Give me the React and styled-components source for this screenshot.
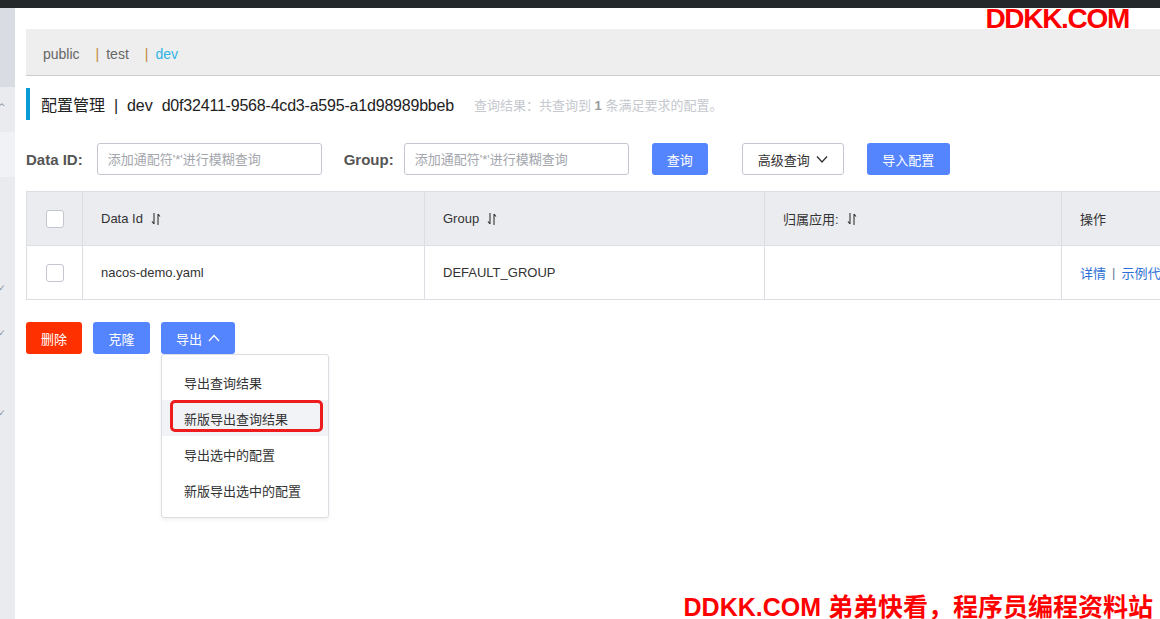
import React from "react";
import styled, { createGlobalStyle } from "styled-components";

const GlobalStyle = createGlobalStyle`
  html, body {
    margin: 0;
    padding: 0;
    background: #ffffff;
    overflow: hidden;
  }
  body {
    font-family: "Liberation Sans", "Noto Sans CJK SC", sans-serif;
    color: #333;
  }
  * { box-sizing: border-box; }
`;

const Page = styled.div`
  position: relative;
  width: 1160px;
  height: 619px;
  overflow: hidden;
  display: flex;
  flex-direction: column;
`;

const TopBar = styled.div`
  height: 8px;
  flex: none;
  background: #25282b;
`;

const Body = styled.div`
  flex: 1;
  display: flex;
  min-height: 0;
`;

const Sidebar = styled.div`
  width: 15px;
  flex: none;
  display: flex;
  flex-direction: column;
  background: #e9ebef;
`;

const SideBlock = styled.div`
  height: ${(p) => p.h}px;
  flex: none;
  background: ${(p) => p.bg || "transparent"};
  position: relative;
`;

const SideMark = styled.span`
  position: absolute;
  left: -2px;
  top: ${(p) => p.top}px;
  font-size: 9px;
  line-height: 9px;
  color: #8a8f99;
  font-family: "DejaVu Sans", sans-serif;
`;

const Main = styled.div`
  flex: 1;
  min-width: 0;
  padding: 21px 0 0 11px;
  display: flex;
  flex-direction: column;
`;

const NamespaceBar = styled.div`
  height: 47px;
  background: #eeeeee;
  border-bottom: 1px solid #cccccc;
  display: flex;
  align-items: center;
  padding: 3px 0 0 17px;
  font-size: 14px;
`;

const NsItem = styled.span`
  color: ${(p) => (p.active ? "#2fb4e5" : "#666")};
  margin-right: 16px;
`;

const NsSep = styled.span`
  color: #c1883a;
  margin-right: 7px;
`;

const TitleRow = styled.div`
  margin-top: 12px;
  height: 32px;
  border-left: 4px solid #0a9bd4;
  padding-left: 11px;
  display: flex;
  align-items: center;
  gap: 20px;
`;

const TitleText = styled.span`
  font-size: 16px;
  color: #222;
  white-space: pre;
`;

const Hash = styled.span`
  letter-spacing: -0.2px;
`;

const ResultText = styled.span`
  font-size: 13px;
  color: #c5c8ce;
  b {
    color: #999;
    font-weight: bold;
  }
`;

const SearchRow = styled.div`
  margin-top: 23px;
  height: 32px;
  display: flex;
  align-items: center;
`;

const Label = styled.label`
  font-size: 15px;
  font-weight: bold;
  color: #555;
  margin-right: ${(p) => p.mr}px;
`;

const Input = styled.input`
  width: 225px;
  height: 32px;
  border: 1px solid #c4c6cf;
  border-radius: 3px;
  padding: 0 10px;
  font-size: 13px;
  font-family: "Liberation Sans", "Noto Sans CJK SC", sans-serif;
  margin-right: ${(p) => p.mr}px;
  &::placeholder {
    color: #a3a6ad;
  }
`;

const Button = styled.button`
  height: 32px;
  padding: 0;
  border-radius: 3px;
  border: 1px solid ${(p) => (p.kind === "normal" ? "#c4c6cf" : "transparent")};
  background: ${(p) =>
    p.kind === "danger" ? "#ff3000" : p.kind === "normal" ? "#fff" : "#5584ff"};
  color: ${(p) => (p.kind === "normal" ? "#333" : "#fff")};
  font-size: 13px;
  font-family: "Liberation Sans", "Noto Sans CJK SC", sans-serif;
  display: inline-flex;
  align-items: center;
  justify-content: center;
  gap: 6px;
  margin-right: ${(p) => p.mr || 0}px;
  width: ${(p) => p.w}px;
  flex: none;
  cursor: pointer;
`;

const Table = styled.div`
  margin-top: 16px;
  width: 1200px;
  border: 1px solid #dcdee3;
  border-right: none;
  display: grid;
  grid-template-columns: 55px 342px 340px 297px 1fr;
`;

const Cell = styled.div`
  height: ${(p) => (p.head ? 54 : 53)}px;
  background: ${(p) => (p.head ? "#ebecf0" : "#fff")};
  border-left: ${(p) => (p.first ? "none" : "1px solid #dcdee3")};
  border-bottom: ${(p) => (p.head ? "1px solid #dcdee3" : "none")};
  display: flex;
  align-items: center;
  justify-content: ${(p) => (p.center ? "center" : "flex-start")};
  padding-left: ${(p) => (p.center ? 0 : 18)}px;
  font-size: 13px;
  color: #333;
  gap: ${(p) => (p.links ? 0 : 8)}px;
`;

const Checkbox = styled.span`
  width: 18px;
  height: 18px;
  border: 1px solid #c4c6cf;
  border-radius: 3px;
  background: #fff;
  display: block;
`;

const LinkText = styled.span`
  color: #2c6fd6;
`;

const LinkSep = styled.span`
  color: #6b7a99;
  margin: 0 6px;
`;

const ActionRow = styled.div`
  margin-top: 22px;
  display: flex;
  align-items: flex-start;
`;

const ExportWrap = styled.div`
  position: relative;
`;

const Menu = styled.div`
  position: absolute;
  top: 32px;
  left: 0;
  width: 168px;
  padding: 9px 0 9px;
  background: #fff;
  border: 1px solid #dcdee3;
  border-radius: 3px;
  box-shadow: 0 2px 4px rgba(0, 0, 0, 0.06);
  z-index: 5;
`;

const MenuItem = styled.div`
  position: relative;
  height: 36px;
  display: flex;
  align-items: center;
  padding-left: 22px;
  font-size: 13px;
  color: #333;
  white-space: nowrap;
  background: ${(p) => (p.hover ? "#f2f3f7" : "transparent")};
`;

const Annotation = styled.span`
  position: absolute;
  left: 8px;
  top: 0;
  width: 153px;
  height: 32px;
  border: 3px solid #ee1c1c;
  border-radius: 5px;
`;

const WatermarkTop = styled.div`
  position: absolute;
  top: 3px;
  right: 31px;
  color: #ff0000;
  font-size: 28px;
  font-weight: bold;
  letter-spacing: -1.3px;
  font-family: "Liberation Sans", sans-serif;
`;

const WatermarkBottom = styled.div`
  position: absolute;
  bottom: -4px;
  right: 7px;
  color: #ff0000;
  font-size: 25px;
  font-weight: bold;
  white-space: pre;
  font-family: "Liberation Sans", "Noto Sans CJK SC", sans-serif;
`;

const SortIcon = () => (
  <svg width="10" height="14" viewBox="0 0 10 14" fill="none" stroke="#333" strokeWidth="1.1">
    <path d="M3 1v11M1 9.5l2 2.5" />
    <path d="M7 13V2M9 4.5L7 2" />
  </svg>
);

const Chevron = ({ up }) => (
  <svg width="12" height="8" viewBox="0 0 12 8" fill="none" stroke="currentColor" strokeWidth="1.3">
    {up ? <path d="M1 7l5-5.5 5 5.5" /> : <path d="M1 1.5l5 5.5 5-5.5" />}
  </svg>
);

export default function App() {
  return (
    <Page>
      <GlobalStyle />
      <TopBar />
      <Body>
        <Sidebar>
          <SideBlock h={79} bg="#d9dce3" />
          <SideBlock h={45} bg="#e9ebef">
            <SideMark top={16}>^</SideMark>
          </SideBlock>
          <SideBlock h={45} bg="#f1f2f5" />
          <SideBlock h={107} />
          <SideBlock h={45}>
            <SideMark top={0}>✓</SideMark>
          </SideBlock>
          <SideBlock h={80}>
            <SideMark top={0}>✓</SideMark>
          </SideBlock>
          <SideBlock h={20}>
            <SideMark top={0}>✓</SideMark>
          </SideBlock>
        </Sidebar>
        <Main>
          <NamespaceBar>
            <NsItem>public</NsItem>
            <NsSep>|</NsSep>
            <NsItem>test</NsItem>
            <NsSep>|</NsSep>
            <NsItem active>dev</NsItem>
          </NamespaceBar>

          <TitleRow>
            <TitleText>
              配置管理  |  dev  <Hash>d0f32411-9568-4cd3-a595-a1d98989bbeb</Hash>
            </TitleText>
            <ResultText>
              查询结果：共查询到 <b>1</b> 条满足要求的配置。
            </ResultText>
          </TitleRow>

          <SearchRow>
            <Label mr={14}>Data ID:</Label>
            <Input placeholder="添加通配符'*'进行模糊查询" mr={22} />
            <Label mr={10}>Group:</Label>
            <Input placeholder="添加通配符'*'进行模糊查询" mr={23} />
            <Button w={56} mr={34}>查询</Button>
            <Button kind="normal" w={102} mr={23}>
              高级查询 <Chevron />
            </Button>
            <Button w={83}>导入配置</Button>
          </SearchRow>

          <Table>
            <Cell head first center>
              <Checkbox />
            </Cell>
            <Cell head>
              Data Id <SortIcon />
            </Cell>
            <Cell head>
              Group <SortIcon />
            </Cell>
            <Cell head>
              归属应用: <SortIcon />
            </Cell>
            <Cell head>操作</Cell>

            <Cell first center>
              <Checkbox />
            </Cell>
            <Cell>nacos-demo.yaml</Cell>
            <Cell>DEFAULT_GROUP</Cell>
            <Cell />
            <Cell links>
              <LinkText>详情</LinkText>
              <LinkSep>|</LinkSep>
              <LinkText>示例代码</LinkText>
            </Cell>
          </Table>

          <ActionRow>
            <Button kind="danger" w={56} mr={11}>删除</Button>
            <Button w={57} mr={11}>克隆</Button>
            <ExportWrap>
              <Button w={74}>
                导出 <Chevron up />
              </Button>
              <Menu>
                <MenuItem>导出查询结果</MenuItem>
                <MenuItem hover>
                  新版导出查询结果
                  <Annotation />
                </MenuItem>
                <MenuItem>导出选中的配置</MenuItem>
                <MenuItem>新版导出选中的配置</MenuItem>
              </Menu>
            </ExportWrap>
          </ActionRow>
        </Main>
      </Body>
      <WatermarkTop>DDKK.COM</WatermarkTop>
      <WatermarkBottom>DDKK.COM 弟弟快看，程序员编程资料站</WatermarkBottom>
    </Page>
  );
}
